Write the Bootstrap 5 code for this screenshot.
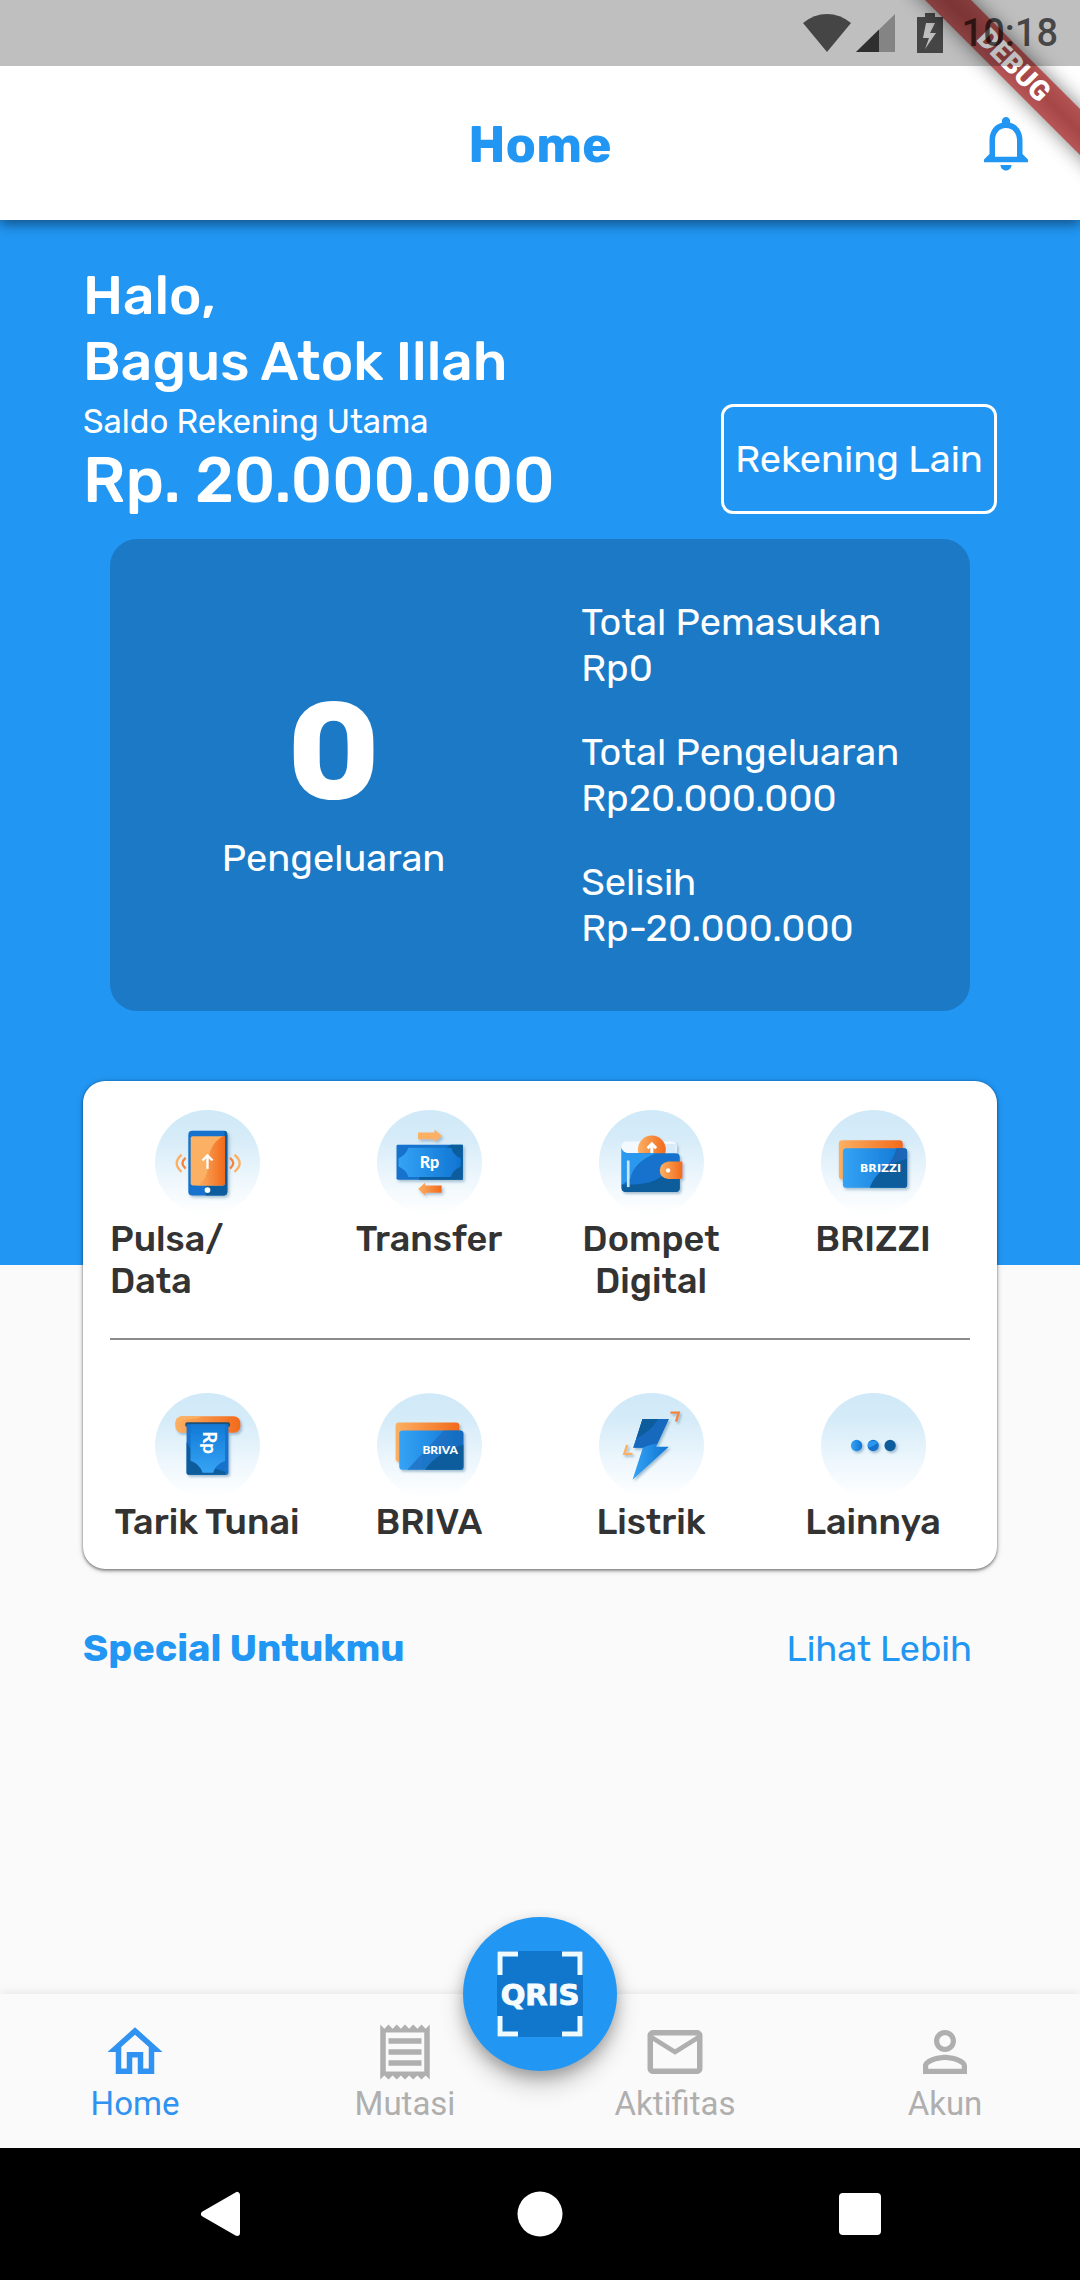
<!DOCTYPE html>
<html lang="id">
<head>
<meta charset="utf-8">
<meta name="viewport" content="width=device-width, initial-scale=1">
<title>Home</title>
<link href="https://cdn.jsdelivr.net/npm/bootstrap@5.3.0/dist/css/bootstrap.min.css" rel="stylesheet">
<style>
  :root { --brand: #2196f3; --ink: #333; --muted: #afafaf; --gutter: 83px; }
  body { font-family: Rubik, Roboto, "Liberation Sans", sans-serif; background: #fafafa; }
  a { text-decoration: none; }
  svg { display: block; }

  .status-bar { height: 66px; padding-right: 22px; background: rgba(0,0,0,.25); z-index: 30; color: rgba(0,0,0,.64); }
  .status-time { font: 500 38px/66px Roboto, sans-serif; }
  .top-shell { background: #fff; box-shadow: 0 5px 11px rgba(0,0,0,.42); z-index: 20; }
  .debug-ribbon { width: 180px; height: 190px; z-index: 25; pointer-events: none; }
  .app-bar { height: 154px; }
  .app-title { font-size: 50px; line-height: 60px; font-weight: 700; color: var(--brand); }
  .bell-btn { right: 41px; color: var(--brand); }

  .hero { background: var(--brand); color: #fff; padding: 43px var(--gutter) 254px; }
  .greeting { font-size: 55px; line-height: 66px; font-weight: 500; }
  .saldo-label { font-size: 33px; line-height: 53px; }
  .saldo-value { font-size: 63px; line-height: 66px; font-weight: 500; }
  .btn-account { width: 276px; height: 110px; border: 3px solid #fff; border-radius: 12px; color: #fff; font-size: 38px; padding: 0; }
  .summary { background: #1b79c6; border-radius: 27px; margin: 25px 27px 0; padding: 53px 0; min-height: 472px; }
  .summary-main { width: 52%; }
  .summary-count { font-size: 138px; line-height: 166px; font-weight: 700; }
  .summary-text { font-size: 38px; line-height: 46px; }
  .summary-list { width: 48%; padding-left: 24px; gap: 38px; }

  .menu-panel { margin: -184px var(--gutter) 0; background: #fff; border-radius: 22px; padding: 29px 13px 26px;
    box-shadow: 0 2px 3px rgba(0,0,0,.32), 0 1px 6px rgba(0,0,0,.2), 0 0 2px rgba(0,0,0,.3); }
  .menu-divider { margin: 36px 14px 53px; border: 0; border-top: 2px solid #8c8c8c; opacity: 1; }
  .menu-tile { color: var(--ink); font-size: 36px; line-height: 42px; font-weight: 500; gap: 3px; text-align: center; }
  .menu-tile svg { width: 105px; height: 105px; }
  .tile-start { width: 100%; padding-left: 14px; text-align: left; }

  .promo { padding: 55px 108px 0 var(--gutter); color: var(--brand); }
  .promo-title { font-size: 38px; line-height: 48px; font-weight: 700; }
  .promo a { color: var(--brand); font-size: 36px; line-height: 48px; }

  .tab-bar { height: 154px; background: #fafafa; box-shadow: 0 0 10px rgba(0,0,0,.1); }
  .tab-item { font: 400 33px/38px Roboto, sans-serif; color: var(--muted); padding-top: 25px; }
  .tab-item.active { color: #3092f1; }
  .tab-item svg { width: 66px; height: 66px; }
  .qris-btn { width: 154px; height: 154px; border-radius: 50%; background: var(--brand); border: 0; padding: 0;
    box-shadow: 0 14px 24px rgba(0,0,0,.2), 0 6px 14px rgba(0,0,0,.22); }
  .system-bar { height: 132px; background: #000; padding: 0 60px; }
  .system-bar .btn { color: #fff; padding: 0; border: 0; }
</style>
</head>
<body class="d-flex flex-column min-vh-100 overflow-x-hidden">

<header class="top-shell position-relative">
  <svg class="debug-ribbon position-absolute top-0 end-0" viewBox="900 0 180 190" aria-label="DEBUG">
    <defs>
      <filter id="ribbonBlur" x="-30%" y="-30%" width="160%" height="160%"><feGaussianBlur stdDeviation="10"/></filter>
      <linearGradient id="ribbonFill" gradientUnits="userSpaceOnUse" x1="1000" y1="78" x2="1026" y2="52">
        <stop offset="0" stop-color="#b95858"/><stop offset=".5" stop-color="#a64646"/><stop offset="1" stop-color="#b55454"/>
      </linearGradient>
    </defs>
    <path d="M885 -40L931 -40L1120 149L1120 195Z" fill="#000" opacity=".5" filter="url(#ribbonBlur)"/>
    <path d="M885 -40L931 -40L1120 149L1120 195Z" fill="url(#ribbonFill)"/>
    <text transform="translate(1014 65) rotate(45)" text-anchor="middle" dominant-baseline="central" font-family="Roboto, sans-serif" font-weight="900" font-size="28" fill="#fff">DEBUG</text>
  </svg>
  <div class="status-bar position-relative d-flex align-items-center justify-content-end">
    <svg width="146" height="66" viewBox="798 0 146 66" fill="currentColor" aria-hidden="true">
      <path d="M825 52L801 23Q812 14 825 14T849 23Z"/>
      <path d="M854 52L893 14V52Z" opacity=".48"/><path d="M854 52L877 29.500V52Z"/>
      <path fill-rule="evenodd" d="M923 13h10v4h8v36h-26V17h8ZM924 23l-3 15h6l-4 11 11-16h-6l5-10Z"/>
    </svg>
    <span class="status-time ms-3">10:18</span>
  </div>
  <div class="app-bar position-relative d-flex align-items-center justify-content-center">
    <h1 class="app-title mt-1 mb-0">Home</h1>
    <button class="btn bell-btn position-absolute p-0 border-0" type="button" aria-label="Notifikasi">
      <svg width="66" height="66" viewBox="0 0 24 24" fill="currentColor"><path d="M12 22c1.100 0 2-.9 2-2h-4c0 1.100.9 2 2 2zm6-6v-5c0-3.070-1.630-5.640-4.500-6.320V4c0-.83-.67-1.500-1.500-1.500s-1.500.67-1.500 1.500v.68C7.640 5.360 6 7.920 6 11v5l-2 2v1h16v-1l-2-2zm-2 1H8v-6c0-2.480 1.510-4.500 4-4.500s4 2.020 4 4.500v6z"/></svg>
    </button>
  </div>
</header>

<main class="flex-grow-1">
  <section class="hero">
    <div class="d-flex justify-content-between align-items-end">
      <div>
        <div class="greeting">Halo,<br>Bagus Atok Illah</div>
        <div class="saldo-label">Saldo Rekening Utama</div>
        <div class="saldo-value">Rp. 20.000.000</div>
      </div>
      <button class="btn btn-account" type="button">Rekening Lain</button>
    </div>
    <div class="summary d-flex align-items-center">
      <div class="summary-main text-center">
        <div class="summary-count">0</div>
        <div class="summary-text">Pengeluaran</div>
      </div>
      <div class="summary-list summary-text d-flex flex-column">
        <div>Total Pemasukan<br>Rp0</div>
        <div>Total Pengeluaran<br>Rp20.000.000</div>
        <div>Selisih<br>Rp-20.000.000</div>
      </div>
    </div>
  </section>

  <svg width="0" height="0" class="position-absolute" aria-hidden="true">
    <defs>
      <linearGradient id="sky" x1="0" y1="0" x2="0" y2="1"><stop offset="0" stop-color="#d0e9f8"/><stop offset=".25" stop-color="#d5ebf8"/><stop offset=".7" stop-color="#f0f8fd"/><stop offset="1" stop-color="#fff"/></linearGradient>
      <linearGradient id="org" x1="0" y1="0" x2="1" y2="0"><stop offset="0" stop-color="#fbb063"/><stop offset="1" stop-color="#f26a1b"/></linearGradient>
      <linearGradient id="blu" x1="0" y1="0" x2="1" y2="0"><stop offset="0" stop-color="#35a3f5"/><stop offset="1" stop-color="#0f75d2"/></linearGradient>
      <linearGradient id="bluV" x1="0" y1="0" x2="0" y2="1"><stop offset="0" stop-color="#1279d6"/><stop offset="1" stop-color="#36a4f5"/></linearGradient>
      <filter id="soft" x="-20%" y="-20%" width="150%" height="150%"><feDropShadow dx="5" dy="6" stdDeviation="4" flood-color="#3b6a92" flood-opacity=".4"/></filter>
    </defs>
  </svg>

  <nav class="menu-panel position-relative" aria-label="Menu">
    <div class="row g-0">
      <div class="col-3"><a href="#" class="menu-tile d-flex flex-column align-items-center">
        <svg viewBox="225 88 312 312"><circle cx="381" cy="244" r="156" fill="url(#sky)"/>
          <g filter="url(#soft)">
            <rect x="324" y="150" width="116" height="192" rx="12" fill="#1272cc"/>
            <path d="M376 342V312H440V330Q440 342 428 342ZM432 150Q440 152 440 162V312H432Z" fill="#0b5c9b"/>
            <rect x="331" y="166" width="102" height="146" rx="6" fill="#fbb063"/>
            <path d="M433 166V306Q433 312 427 312H350Q382 296 383 250Q383 190 427 166Z" fill="url(#org)"/>
            <circle cx="381" cy="326" r="8.500" fill="#fff"/>
            <path d="M381 263V226M366 238L381 223L396 238" fill="none" stroke="#fff" stroke-width="7"/>
          </g>
          <g fill="none" stroke-width="7" stroke="#fbb063"><path d="M304 221Q275 246 304 272M461 221Q492 246 461 272"/><path stroke="#f4843b" d="M316 230Q297 246 316 262M448 230Q467 246 448 262"/></g>
        </svg><span class="tile-start">Pulsa/<br>Data</span></a></div>
      <div class="col-3"><a href="#" class="menu-tile d-flex flex-column align-items-center">
        <svg viewBox="891 86 312 312"><circle cx="1047" cy="242" r="156" fill="url(#sky)"/>
          <g filter="url(#soft)">
            <path d="M1013 153H1062V144L1084 163L1062 182V173H1013Z" fill="#fbb063"/>
            <path d="M1083 310H1034V302L1013 321L1034 340V332H1083Z" fill="url(#org)"/>
            <rect x="949" y="189" width="197" height="104" rx="4" fill="#1272cc"/>
            <path d="M1110 189H1146V293H1015L1040 240Z" fill="#0b5c9b"/>
            <path d="M984 198H1112Q1116 218 1140 230V254Q1116 264 1111 285H984Q978 264 955 254V230Q978 218 984 198Z" fill="url(#blu)"/>
          </g>
          <text x="1047" y="258" text-anchor="middle" font-family="Lato, sans-serif" font-weight="900" font-size="48" fill="#fff">Rp</text>
        </svg><span>Transfer</span></a></div>
      <div class="col-3"><a href="#" class="menu-tile d-flex flex-column align-items-center">
        <svg viewBox="174 88 316 316"><circle cx="332" cy="246" r="158" fill="url(#sky)"/>
          <g filter="url(#soft)">
            <rect x="242" y="183" width="166" height="60" rx="14" fill="#f4f9ff"/>
            <path d="M370 190H405V220H370Z" fill="#d8ebfb"/>
            <circle cx="333" cy="207" r="42" fill="url(#org)"/>
            <path d="M320 203L333 190L346 203M333 192V220" stroke="#fff" stroke-width="9" fill="none"/>
            <path d="M242 202Q244 217 262 218H404Q417 218 417 230V322Q417 335 404 335H256Q242 335 242 322Z" fill="#1272cc"/>
            <path d="M242 202Q244 217 262 218H345Q276 246 268 296L242 314Z" fill="#2c98ee"/>
            <path d="M242 312Q330 318 370 282Q400 250 417 245V322Q417 335 404 335H256Q242 335 242 322Z" fill="#0b5c9b"/>
            <path d="M262 240V320" stroke="#c9e6fb" stroke-width="8"/>
            <path d="M425 243V288Q425 296 417 296H382Q357 292 357 270T382 243Z" fill="url(#org)"/><circle cx="382" cy="270" r="6.500" fill="#fff"/>
          </g>
        </svg><span>Dompet<br>Digital</span></a></div>
      <div class="col-3"><a href="#" class="menu-tile d-flex flex-column align-items-center">
        <svg viewBox="842 90 312 312"><circle cx="998" cy="246" r="156" fill="url(#sky)"/>
          <g filter="url(#soft)">
            <rect x="895" y="180" width="190" height="116" rx="10" fill="url(#org)"/>
            <rect x="907" y="204" width="191" height="117" rx="10" fill="url(#blu)"/>
            <path d="M1098 234V311Q1098 321 1088 321H987Q1010 256 1098 234Z" fill="#0b5c9b"/>
            <path d="M1066 204H1088Q1098 204 1098 214V234Q1060 242 1032 262Q1060 236 1066 204Z" fill="#1a66b5"/>
          </g>
          <text x="1019" y="274" text-anchor="middle" font-family="DejaVu Sans, sans-serif" font-weight="700" font-size="33" fill="#fff">BRIZZI</text>
        </svg><span>BRIZZI</span></a></div>
    </div>
    <hr class="menu-divider">
    <div class="row g-0">
      <div class="col-3"><a href="#" class="menu-tile d-flex flex-column align-items-center">
        <svg viewBox="227 162 316 316"><circle cx="385" cy="320" r="158" fill="url(#sky)"/>
          <g filter="url(#soft)">
            <rect x="288" y="232" width="196" height="50" rx="20" fill="url(#org)"/>
            <path d="M288 258Q300 240 356 238L370 232H308Q288 234 288 258Z" fill="#fbb063"/>
            <rect x="318" y="250" width="135" height="14" rx="6" fill="#1f5077"/>
            <path d="M322 256H448V402Q448 408 442 408H328Q322 408 322 402Z" fill="#1272cc"/>
            <path d="M322 310L334 330V366L440 400V408H328Q322 408 322 402Z" fill="#0b5c9b"/>
            <path d="M334 256H438V366Q408 378 402 402H370Q362 376 334 366Z" fill="url(#bluV)"/>
          </g>
          <text transform="translate(371 311) rotate(90)" text-anchor="middle" font-family="Lato, sans-serif" font-weight="900" font-size="56" fill="#fff">Rp</text>
        </svg><span>Tarik Tunai</span></a></div>
      <div class="col-3"><a href="#" class="menu-tile d-flex flex-column align-items-center">
        <svg viewBox="887 166 316 316"><circle cx="1045" cy="325" r="158" fill="url(#sky)"/>
          <g filter="url(#soft)">
            <rect x="943" y="255" width="192" height="118" rx="10" fill="url(#org)"/>
            <rect x="954" y="279" width="193" height="118" rx="10" fill="url(#blu)"/>
            <path d="M1088 279H1137Q1147 279 1147 289V397H978Z" fill="#1a66b5" opacity=".6"/>
            <path d="M1147 322V387Q1147 397 1137 397H1032Q1066 346 1147 322Z" fill="#0b5c9b"/>
          </g>
          <text x="1077" y="350" text-anchor="middle" font-family="Lato, sans-serif" font-weight="900" font-size="36" fill="#fff">BRIVA</text>
        </svg><span>BRIVA</span></a></div>
      <div class="col-3"><a href="#" class="menu-tile d-flex flex-column align-items-center">
        <svg viewBox="174 162 316 316"><circle cx="332" cy="320" r="158" fill="url(#sky)"/>
          <g filter="url(#soft)">
            <path d="M305 240H384L346 324H384L275 423L306 327H277Z" fill="url(#blu)"/>
            <path d="M305 240H384L350 314Q322 318 306 327H277Z" fill="#1569bd"/>
            <path d="M305 240H352Q330 276 287 299Z" fill="#0b5c9b"/>
            <path d="M389 221H414L406 248" fill="none" stroke="#f4843b" stroke-width="7"/>
            <path d="M259 318L250 345H275" fill="none" stroke="#fbb063" stroke-width="7"/>
          </g>
        </svg><span>Listrik</span></a></div>
      <div class="col-3"><a href="#" class="menu-tile d-flex flex-column align-items-center">
        <svg viewBox="838 163 316 316"><circle cx="996" cy="321" r="158" fill="url(#sky)"/>
          <g filter="url(#soft)"><circle cx="945" cy="321" r="17" fill="url(#blu)"/><circle cx="995" cy="321" r="17" fill="#1272cc"/><path d="M979 316Q990 300 1010 312Q1000 322 982 328Z" fill="#2c98ee"/><circle cx="1046" cy="321" r="17" fill="#0b5c9b"/></g>
        </svg><span>Lainnya</span></a></div>
    </div>
  </nav>

  <section class="promo d-flex justify-content-between align-items-baseline">
    <h2 class="promo-title m-0">Special Untukmu</h2>
    <a href="#">Lihat Lebih</a>
  </section>
</main>

<footer>
  <nav class="tab-bar position-relative" aria-label="Navigasi utama">
    <div class="d-flex">
      <a href="#" class="tab-item active flex-fill w-25 d-flex flex-column align-items-center"><svg viewBox="0 0 24 24" fill="currentColor"><path d="M12 5.690l5 4.500V18h-2v-6H9v6H7v-7.810l5-4.500M12 3L2 12h3v8h6v-6h2v6h6v-8h3L12 3z"/></svg><span>Home</span></a>
      <a href="#" class="tab-item flex-fill w-25 d-flex flex-column align-items-center"><svg viewBox="0 0 24 24" fill="currentColor"><path d="M19.500 3.500L18 2l-1.500 1.500L15 2l-1.500 1.500L12 2l-1.500 1.500L9 2 7.500 3.500 6 2 4.500 3.500 3 2v20l1.500-1.500L6 22l1.500-1.500L9 22l1.500-1.500L12 22l1.500-1.500L15 22l1.500-1.500L18 22l1.500-1.500L21 22V2l-1.500 1.500zM19 19.090H5V4.910h14v14.180zM6 15h12v2H6zm0-4h12v2H6zm0-4h12v2H6z"/></svg><span>Mutasi</span></a>
      <a href="#" class="tab-item flex-fill w-25 d-flex flex-column align-items-center"><svg viewBox="0 0 24 24" fill="currentColor"><path d="M22 6c0-1.100-.9-2-2-2H4c-1.100 0-2 .9-2 2v12c0 1.100.9 2 2 2h16c1.100 0 2-.9 2-2V6zm-2 0l-8 5-8-5h16zm0 12H4V8l8 5 8-5v10z"/></svg><span>Aktifitas</span></a>
      <a href="#" class="tab-item flex-fill w-25 d-flex flex-column align-items-center"><svg viewBox="0 0 24 24" fill="currentColor"><path d="M12 5.900c1.160 0 2.100.94 2.100 2.100s-.94 2.100-2.100 2.100S9.900 9.160 9.900 8s.94-2.100 2.100-2.100m0 9c2.970 0 6.100 1.460 6.100 2.100v1.100H5.900V17c0-.64 3.130-2.100 6.100-2.100M12 4C9.790 4 8 5.790 8 8s1.790 4 4 4 4-1.790 4-4-1.790-4-4-4zm0 9c-2.670 0-8 1.340-8 4v3h16v-3c0-2.660-5.330-4-8-4z"/></svg><span>Akun</span></a>
    </div>
    <button class="qris-btn position-absolute top-0 start-50 translate-middle" type="button" aria-label="QRIS">
      <svg class="mx-auto" width="88" height="88" viewBox="0 0 88 88">
        <rect x="1" y="1" width="86" height="86" fill="#1177cc"/>
        <path d="M22 4H4V25M66 4H84V25M22 84H4V66M66 84H84V66" fill="none" stroke="#effaff" stroke-width="5"/>
        <text x="44" y="55" text-anchor="middle" font-family="DejaVu Sans, sans-serif" font-weight="700" font-size="29" fill="#f4fcff" stroke="#f4fcff" stroke-width="1">QRIS</text>
      </svg>
    </button>
  </nav>
  <div class="system-bar d-flex align-items-center justify-content-around">
    <button class="btn" type="button" aria-label="Kembali"><svg width="46" height="46" viewBox="0 0 46 46" fill="currentColor" stroke="currentColor" stroke-width="6" stroke-linejoin="round"><path d="M40 4V42L7 23Z"/></svg></button>
    <button class="btn" type="button" aria-label="Beranda"><svg width="46" height="46" viewBox="0 0 46 46" fill="currentColor"><circle cx="23" cy="23" r="22.500"/></svg></button>
    <button class="btn" type="button" aria-label="Aplikasi terbaru"><svg width="46" height="46" viewBox="0 0 46 46" fill="currentColor"><rect x="2" y="2" width="42" height="42" rx="4"/></svg></button>
  </div>
</footer>
<script src="https://cdn.jsdelivr.net/npm/bootstrap@5.3.0/dist/js/bootstrap.bundle.min.js"></script>
</body>
</html>
